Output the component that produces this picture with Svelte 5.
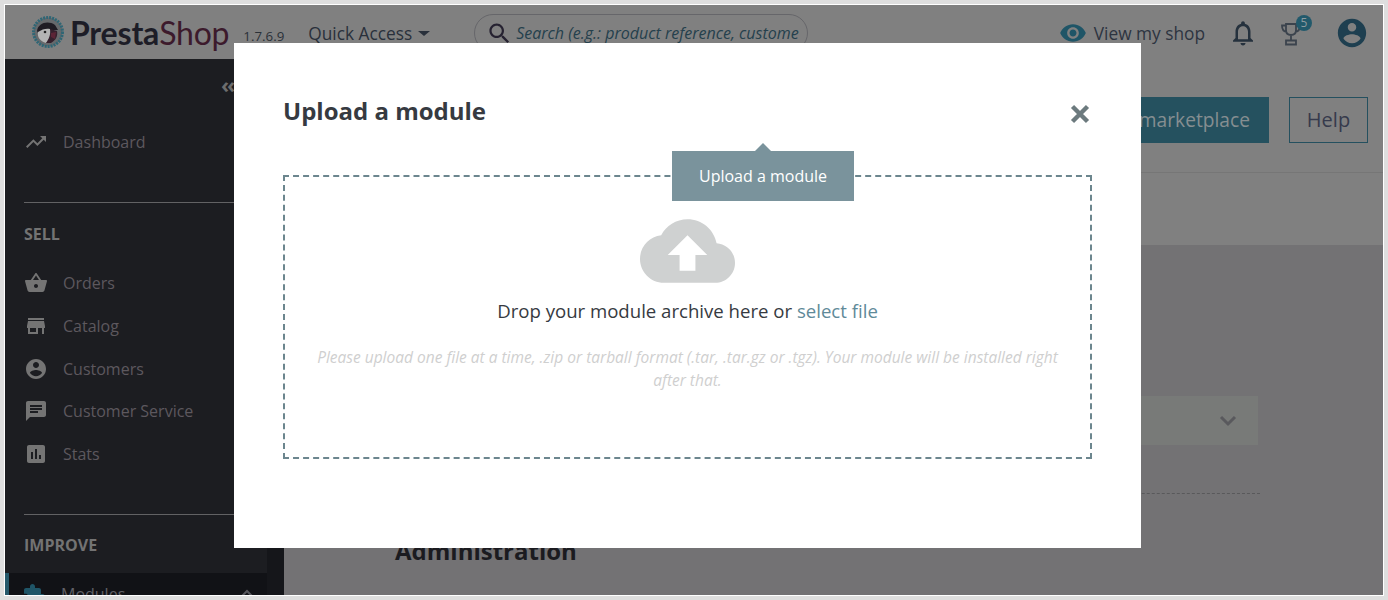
<script>
	const icons = {
		trend: 'M16 6l2.29 2.29-4.88 4.88-4-4L2 16.59 3.41 18l6-6 4 4 6.3-6.29L22 12V6z',
		basket: 'M17.21 9l-4.38-6.56c-.19-.28-.51-.42-.83-.42-.32 0-.64.14-.83.43L6.79 9H2c-.55 0-1 .45-1 1 0 .09.01.18.04.27l2.54 9.27c.23.84 1 1.46 1.92 1.46h13c.92 0 1.69-.62 1.93-1.46l2.54-9.27L23 10c0-.55-.45-1-1-1h-4.79zM9 9l3-4.4L15 9H9zm3 8c-1.1 0-2-.9-2-2s.9-2 2-2 2 .9 2 2-.9 2-2 2z',
		store: 'M20 4H4v2h16V4zm1 10v-2l-1-5H4l-1 5v2h1v6h10v-6h4v6h2v-6h1zm-9 4H6v-4h6v4z',
		account: 'M12 2C6.48 2 2 6.48 2 12s4.48 10 10 10 10-4.48 10-10S17.52 2 12 2zm0 3c1.66 0 3 1.34 3 3s-1.34 3-3 3-3-1.34-3-3 1.34-3 3-3zm0 14.2c-2.5 0-4.71-1.28-6-3.22.03-1.99 4-3.08 6-3.08 1.99 0 5.97 1.09 6 3.08-1.29 1.94-3.5 3.22-6 3.22z',
		chat: 'M20 2H4c-1.1 0-1.99.9-1.99 2L2 22l4-4h14c1.1 0 2-.9 2-2V4c0-1.1-.9-2-2-2zM6 9h12v2H6V9zm8 5H6v-2h8v2zm4-6H6V6h12v2z',
		stats: 'M19 3H5c-1.1 0-2 .9-2 2v14c0 1.1.9 2 2 2h14c1.1 0 2-.9 2-2V5c0-1.1-.9-2-2-2zM9 17H7v-7h2v7zm4 0h-2V7h2v10zm4 0h-2v-4h2v4z',
		extension: 'M20.5 11H19V7c0-1.1-.9-2-2-2h-4V3.5C13 2.12 11.88 1 10.5 1S8 2.12 8 3.5V5H4c-1.1 0-1.99.9-1.99 2v3.8H3.5c1.49 0 2.7 1.21 2.7 2.7s-1.21 2.7-2.7 2.7H2V20c0 1.1.9 2 2 2h3.8v-1.5c0-1.49 1.21-2.7 2.7-2.7 1.49 0 2.7 1.21 2.7 2.7V22H17c1.1 0 2-.9 2-2v-4h1.5c1.38 0 2.5-1.12 2.5-2.5S21.88 11 20.5 11z',
		bell: 'M12 22c1.1 0 2-.9 2-2h-4c0 1.1.9 2 2 2zm6-6v-5c0-3.07-1.63-5.64-4.5-6.32V4c0-.83-.67-1.5-1.5-1.5s-1.5.67-1.5 1.5v.68C7.64 5.36 6 7.92 6 11v5l-2 2v1h16v-1l-2-2zm-2 1H8v-6c0-2.48 1.51-4.5 4-4.5s4 2.02 4 4.5v6z',
		eye: 'M12 4.5C7 4.5 2.73 7.61 1 12c1.73 4.39 6 7.5 11 7.5s9.27-3.11 11-7.5c-1.73-4.39-6-7.5-11-7.5zM12 17c-2.76 0-5-2.24-5-5s2.24-5 5-5 5 2.24 5 5-2.24 5-5 5zm0-8c-1.66 0-3 1.34-3 3s1.34 3 3 3 3-1.34 3-3-1.34-3-3-3z',
		search: 'M15.5 14h-.79l-.28-.27C15.41 12.59 16 11.11 16 9.5 16 5.91 13.09 3 9.5 3S3 5.91 3 9.5 5.91 16 9.5 16c1.61 0 3.09-.59 4.23-1.57l.27.28v.79l5 4.99L20.49 19l-4.99-5zm-6 0C7.01 14 5 11.99 5 9.5S7.01 5 9.5 5 14 7.01 14 9.5 11.99 14 9.5 14z'
	};

	const sellItems = [
		{ label: 'Orders', icon: 'basket' },
		{ label: 'Catalog', icon: 'store' },
		{ label: 'Customers', icon: 'account' },
		{ label: 'Customer Service', icon: 'chat' },
		{ label: 'Stats', icon: 'stats' }
	];
</script>

<div class="frame">
	<div class="page">
		<header class="topbar">
			<svg class="puffin" viewBox="0 0 32 32" width="32" height="32">
				<circle cx="16" cy="16" r="14.5" fill="#66696c" stroke="#2f6675" stroke-width="3" stroke-dasharray="2 1" />
				<path d="M5 15C6 7 16 4 23 9l3 5-9 0-11 3z" fill="#1f1c24" />
				<path d="M6 16c4-3 9-4 12-3 1 5 0 10-4 14-6-2-9-6-8-11z" fill="#b4b4b4" />
				<circle cx="13" cy="16" r="1.3" fill="#222" />
				<path d="M18 13l7 2c1 5-1 9-6 12h-5c3-4 5-9 4-14z" fill="#35202d" />
				<path d="M19 17l5-1-1 7-4-2z" fill="#5c2436" />
			</svg>
			<span class="brand">Presta<span class="shop">Shop</span></span>
			<span class="version">1.7.6.9</span>
			<span class="quick">Quick Access<i class="caret"></i></span>
			<div class="search">
				<svg viewBox="0 0 24 24" width="27" height="27"><path d={icons.search} /></svg>
				<span>Search (e.g.: product reference, custome</span>
			</div>
			<div class="top-right">
				<svg class="eye" viewBox="0 0 24 24" width="28" height="28"><path d={icons.eye} /></svg>
				<span class="shoplink">View my shop</span>
				<svg class="bell" viewBox="0 0 24 24" width="30" height="30"><path d={icons.bell} /></svg>
				<span class="trophy">
					<svg viewBox="0 0 24 26" width="24" height="26" fill="none" stroke="#3b434d" stroke-width="1.8">
						<path d="M7 4h10v6c0 3-2 5-5 5s-5-2-5-5zM7 5.500H3c0 4 2 6 4.500 6.500M17 5.500h4c0 4-2 6-4.500 6.500M12 15v5M7 20.500h10v4H7z" />
					</svg>
					<b>5</b>
				</span>
				<svg class="user" viewBox="0 0 24 24" width="34" height="34"><path d={icons.account} /></svg>
			</div>
		</header>

		<div class="body">
			<nav class="sidebar">
				<div class="collapse">‹‹</div>
				<div class="item first">
					<svg viewBox="0 0 24 24" width="24" height="24"><path d={icons.trend} /></svg>
					<span>Dashboard</span>
				</div>
				<hr />
				<h4>SELL</h4>
				{#each sellItems as item}
					<div class="item">
						<svg viewBox="0 0 24 24" width="24" height="24"><path d={icons[item.icon]} /></svg>
						<span>{item.label}</span>
					</div>
				{/each}
				<hr class="second" />
				<h4 class="improve">IMPROVE</h4>
				<div class="item active">
					<svg viewBox="0 0 24 24" width="24" height="24"><path d={icons.extension} /></svg>
					<span>Modules</span>
					<svg class="chev" viewBox="0 0 12 8" width="12" height="8"><path d="M1 7l5-5 5 5" /></svg>
				</div>
			</nav>

			<main class="content">
				<div class="toolbar">
					<div class="actions">
						<span class="btn-primary">Upload a module from marketplace</span>
						<span class="btn-help">Help</span>
					</div>
				</div>
				<div class="tabs"></div>
				<div class="panel">
					<div class="select">
						<svg viewBox="0 0 20 12" width="20" height="12"><path d="M3 2l7 7 7-7" /></svg>
					</div>
					<div class="rule"></div>
					<h2>Administration</h2>
				</div>
			</main>
		</div>

		<section class="modal">
			<div class="modal-head">
				<h3>Upload a module</h3>
				<svg class="close" viewBox="0 0 20 20" width="20" height="20"><path d="M2.5 2.5l15 15M17.5 2.5l-15 15" /></svg>
			</div>
			<div class="drop">
				<div class="tip">Upload a module</div>
				<svg class="cloud" viewBox="0 4 24 16" width="95" height="64">
					<path d="M19.35 10.04C18.67 6.59 15.64 4 12 4 9.11 4 6.6 5.64 5.35 8.04 2.34 8.36 0 10.91 0 14c0 3.31 2.69 6 6 6h13c2.76 0 5-2.24 5-5 0-2.64-2.05-4.78-4.65-4.96zM14 13v4h-4v-4H7l5-5 5 5h-3z" />
				</svg>
				<p class="prompt">Drop your module archive here or <span>select file</span></p>
				<p class="hint">Please upload one file at a time, .zip or tarball format (.tar, .tar.gz or .tgz). Your module will be installed right after that.</p>
			</div>
		</section>
	</div>
</div>

<style>
	:global(body) {
		margin: 0;
	}
	.frame {
		width: 1388px;
		height: 600px;
		box-sizing: border-box;
		padding: 4px;
		background: #dedede;
		font-family: 'Open Sans', 'Liberation Sans', sans-serif;
		overflow: hidden;
	}
	.page {
		position: relative;
		height: 592px;
		box-sizing: border-box;
		border: 1px solid #fff;
		overflow: hidden;
		display: flex;
		flex-direction: column;
		background: #737274;
	}

	/* top bar */
	.topbar {
		height: 54px;
		flex: none;
		box-sizing: border-box;
		display: flex;
		align-items: center;
		background: #808080;
		padding: 2px 0 0 27px;
		color: #262b36;
	}
	.puffin {
		margin: -2px 6px 0 0;
	}
	.brand {
		font-family: Lato, 'Open Sans', sans-serif;
		font-size: 32px;
		font-weight: 700;
		color: #1d1d27;
		letter-spacing: -0.2px;
		margin-top: -2px;
	}
	.shop {
		font-weight: 400;
		color: #3c1a2c;
	}
	.version {
		font-size: 13.3px;
		margin: 5px 0 0 14px;
		color: #2a3038;
	}
	.quick {
		font-size: 17.3px;
		margin: 1px 0 0 24px;
		display: flex;
		align-items: center;
		color: #29303b;
	}
	.caret {
		border: 5px solid transparent;
		border-top-color: #29303b;
		border-bottom: 0;
		margin-left: 6px;
		border-left-width: 6px;
		border-right-width: 6px;
	}
	.search {
		margin-left: 44px;
		width: 334px;
		height: 38px;
		box-sizing: border-box;
		border: 1px solid #66666a;
		border-radius: 19px;
		display: flex;
		align-items: center;
		padding-left: 11px;
		font-style: italic;
		font-size: 16px;
		color: #25404d;
		white-space: nowrap;
	}
	.search svg {
		fill: #262231;
		margin-right: 3px;
		flex: none;
	}
	.top-right {
		margin-left: auto;
		display: flex;
		align-items: center;
		padding-right: 14px;
	}
	.eye {
		fill: #1f5567;
		margin-right: 7px;
	}
	.shoplink {
		font-size: 17.3px;
		color: #2d3440;
		margin-right: 23px;
	}
	.bell {
		fill: #25313d;
		margin-right: 21px;
	}
	.trophy {
		position: relative;
		display: block;
		height: 26px;
		margin-right: 32px;
	}
	.trophy svg {
		display: block;
	}
	.trophy b {
		position: absolute;
		top: -5px;
		right: -9px;
		width: 16px;
		height: 16px;
		border-radius: 50%;
		background: #22596b;
		color: #8e9a9f;
		font-size: 12px;
		font-weight: 400;
		line-height: 16px;
		text-align: center;
	}
	.user {
		fill: #1e3f50;
	}

	/* sidebar + content */
	.body {
		flex: 1;
		display: flex;
		min-height: 0;
	}
	.sidebar {
		position: relative;
		width: 279px;
		flex: none;
		background: #1c1d21;
		color: #5d585e;
		font-size: 16px;
	}
	.sidebar::after {
		content: '';
		position: absolute;
		top: 0;
		right: 0;
		bottom: 0;
		width: 17px;
		background: #15161a;
	}
	.collapse {
		height: 23px;
		padding: 15px 0 0 216px;
		font-size: 22px;
		line-height: 20px;
		font-weight: 700;
		color: #6d6d6d;
		letter-spacing: -2px;
		box-sizing: content-box;
	}
	.item {
		height: 42.75px;
		display: flex;
		align-items: center;
		padding-left: 19px;
	}
	.item.first {
		margin-top: 24px;
	}
	.item svg {
		fill: #747474;
		margin-right: 15px;
		flex: none;
	}
	.sidebar hr {
		border: 0;
		border-top: 1px solid #626264;
		margin: 38px 0 0 19px;
	}
	.sidebar hr.second {
		margin-top: 38px;
	}
	.sidebar h4 {
		margin: 21px 0 18px 19px;
		font-size: 16px;
		line-height: 20px;
		font-weight: 700;
		color: #737373;
	}
	.sidebar h4.improve {
		margin-top: 20px;
		margin-bottom: 18px;
	}
	.item.active {
		background: #111216;
		border-left: 4px solid #25596b;
		margin-right: 17px;
		padding-left: 13px;
		color: #606066;
		height: 40px;
		align-items: flex-start;
		padding-top: 10px;
		box-sizing: border-box;
		position: relative;
		z-index: 1;
	}
	.item.active svg {
		fill: #1f5567;
	}
	.item.active .chev {
		fill: none;
		stroke: #56565c;
		stroke-width: 2;
		margin: 6px 14px 0 auto;
	}

	.content {
		flex: 1;
		min-width: 0;
		display: flex;
		flex-direction: column;
	}
	.toolbar {
		height: 114px;
		box-sizing: border-box;
		background: #808080;
		border-bottom: 1px solid #767676;
		padding: 38px 15px 0 0;
	}
	.actions {
		display: flex;
		justify-content: flex-end;
		gap: 20px;
	}
	.btn-primary {
		height: 46px;
		line-height: 46px;
		padding: 0 19px;
		background: #25515f;
		color: #858e91;
		font-size: 19.2px;
		font-weight: 400;
		white-space: nowrap;
	}
	.btn-help {
		height: 46px;
		width: 79px;
		box-sizing: border-box;
		line-height: 44px;
		text-align: center;
		border: 1px solid #24505f;
		color: #363a4c;
		font-size: 20px;
		font-weight: 400;
	}
	.tabs {
		height: 72px;
		background: #808080;
	}
	.panel {
		flex: 1;
		padding: 151px 0 0 111px;
	}
	.select {
		width: 863px;
		height: 49px;
		box-sizing: border-box;
		background: #787a78;
		display: flex;
		align-items: center;
		justify-content: flex-end;
		padding-right: 20px;
	}
	.select svg {
		fill: none;
		stroke: #59595d;
		stroke-width: 3;
	}
	.rule {
		width: 865px;
		margin-top: 48px;
		border-top: 1px dashed #59595b;
	}
	.panel h2 {
		margin: 41px 0 0;
		font-size: 24px;
		line-height: 32px;
		font-weight: 700;
		color: #1b1b20;
	}

	/* modal */
	.modal {
		position: absolute;
		left: 229px;
		top: 38px;
		width: 907px;
		height: 505px;
		box-sizing: border-box;
		background: #fff;
		padding: 0 49px;
		z-index: 2;
	}
	.modal-head {
		height: 132px;
		display: flex;
		align-items: center;
		justify-content: space-between;
		box-sizing: border-box;
	}
	.modal-head h3 {
		margin: 3px 0 0;
		font-size: 24px;
		font-weight: 700;
		color: #363a41;
	}
	.close {
		fill: none;
		stroke: #6c7a7e;
		stroke-width: 4.4;
		margin: 10px 2px 0 0;
	}
	.drop {
		position: relative;
		height: 284px;
		box-sizing: border-box;
		border: 2px dashed #6c868e;
		text-align: center;
		padding-top: 42px;
	}
	.tip {
		position: absolute;
		left: 387px;
		top: -26px;
		width: 182px;
		height: 50px;
		line-height: 50px;
		background: #7a939c;
		color: #fff;
		font-size: 16px;
	}
	.tip::before {
		content: '';
		position: absolute;
		left: 83px;
		top: -8px;
		border: 8px solid transparent;
		border-top: 0;
		border-bottom-color: #7a939c;
	}
	.cloud {
		display: block;
		margin: 0 auto;
		fill: #cfd1d1;
	}
	.prompt {
		margin: 14px 0 0;
		font-size: 18.6px;
		line-height: 27px;
		color: #363a41;
	}
	.prompt span {
		color: #5f8a99;
	}
	.hint {
		margin: 22px auto 0;
		width: 760px;
		font-size: 15.5px;
		line-height: 23px;
		font-style: italic;
		color: #cfcfcf;
	}
</style>
